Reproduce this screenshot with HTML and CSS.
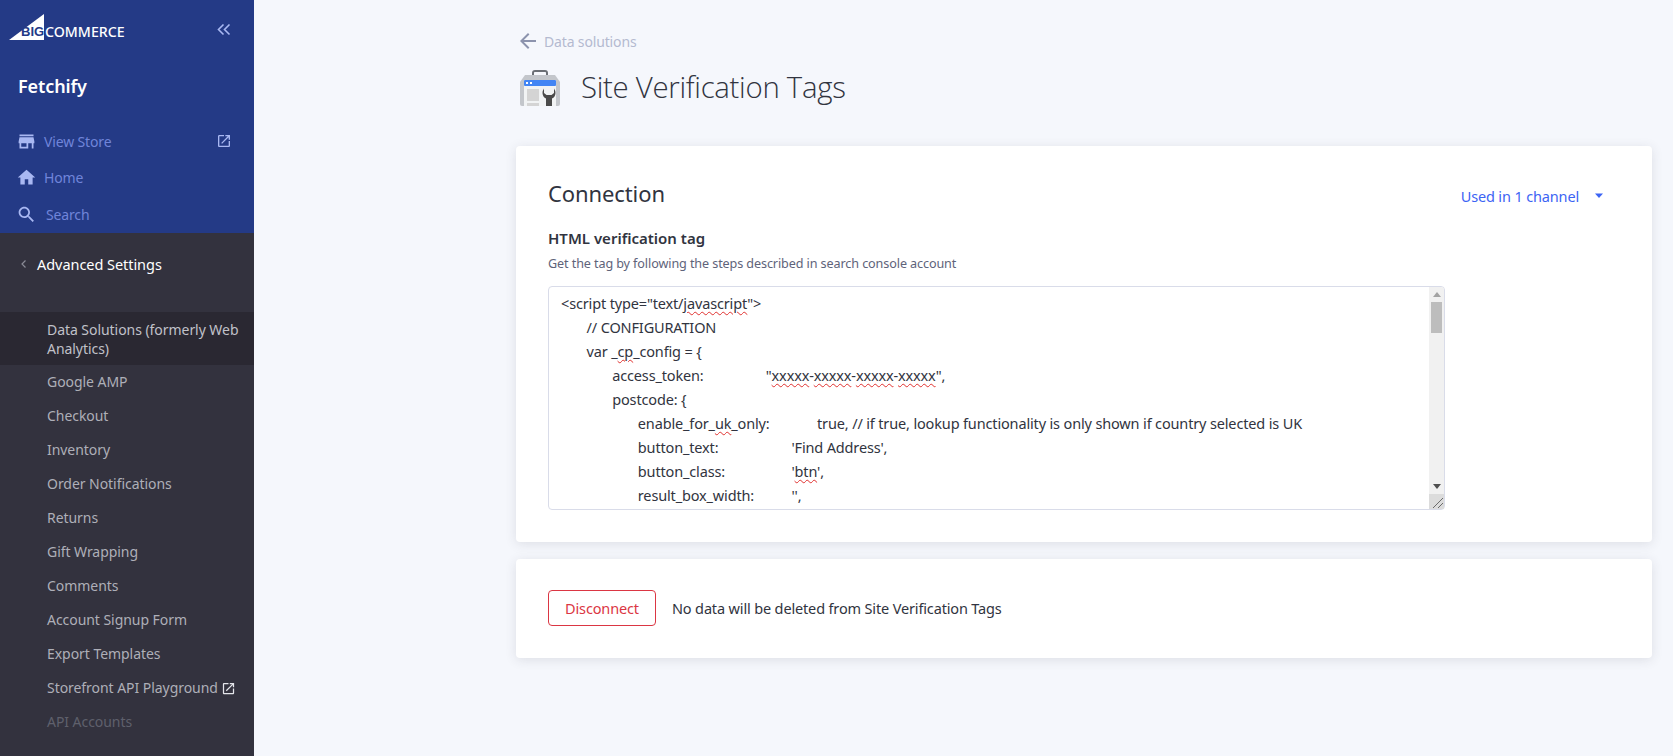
FILE: index.html
```html
<!DOCTYPE html>
<html lang="en">
<head>
<meta charset="utf-8">
<title>Site Verification Tags</title>
<link rel="stylesheet" href="styles.css">
</head>
<body>
<div class="app">
  <aside class="sidebar">
    <div class="brand-area">
      <div class="logo-row">
        <div class="logo">
          <svg class="logo-mark" viewBox="0 0 35 26"><path d="M35 0V26H0Z" fill="#fff"/></svg>
          <span class="logo-big">BIG</span><span class="logo-commerce">COMMERCE</span>
        </div>
        <svg class="collapse" viewBox="0 0 14 14" fill="none" stroke="#a9b8f2" stroke-width="1.6"><path d="M6.500 1.500 1.500 6.500l5 5M12.500 1.500l-5 5 5 5"/></svg>
      </div>
      <div class="store-name">Fetchify</div>
      <nav class="top-nav">
        <a class="top-item">
          <svg class="ico" viewBox="0 0 24 24"><path d="M20 4H4v2h16V4zm1 10v-2l-1-5H4l-1 5v2h1v6h10v-6h4v6h2v-6h1zm-9 4H6v-4h6v4z"/></svg>
          <span class="top-label">View Store</span>
          <svg class="ico-ext" viewBox="0 0 24 24"><path d="M19 19H5V5h7V3H5c-1.110 0-2 .9-2 2v14c0 1.100.89 2 2 2h14c1.100 0 2-.9 2-2v-7h-2v7zM14 3v2h3.590l-9.830 9.830 1.410 1.410L19 6.410V10h2V3h-7z"/></svg>
        </a>
        <a class="top-item">
          <svg class="ico" viewBox="0 0 24 24"><path d="M10 20v-6h4v6h5v-8h3L12 3 2 12h3v8z"/></svg>
          <span class="top-label">Home</span>
        </a>
        <a class="top-item">
          <svg class="ico" viewBox="0 0 24 24"><path d="M15.500 14h-.79l-.28-.27C15.410 12.590 16 11.110 16 9.500 16 5.910 13.090 3 9.500 3S3 5.910 3 9.500 5.910 16 9.500 16c1.610 0 3.090-.59 4.230-1.570l.27.28v.79l5 4.990L20.490 19l-4.990-5zm-6 0C7.010 14 5 11.990 5 9.500S7.010 5 9.500 5 14 7.010 14 9.500 11.990 14 9.500 14z"/></svg>
          <span class="top-label search-label">Search</span>
        </a>
      </nav>
    </div>
    <div class="settings-area">
      <div class="section-head">
        <svg class="back-chev" viewBox="0 0 8 12" fill="none" stroke="#8a8b96" stroke-width="1.2"><path d="M5.500 2.500 2 6l3.500 3.500"/></svg>
        <span>Advanced Settings</span>
      </div>
      <ul class="menu">
        <li class="menu-item active">Data Solutions (formerly Web Analytics)</li>
        <li class="menu-item">Google AMP</li>
        <li class="menu-item">Checkout</li>
        <li class="menu-item">Inventory</li>
        <li class="menu-item">Order Notifications</li>
        <li class="menu-item">Returns</li>
        <li class="menu-item">Gift Wrapping</li>
        <li class="menu-item">Comments</li>
        <li class="menu-item">Account Signup Form</li>
        <li class="menu-item">Export Templates</li>
        <li class="menu-item">Storefront API Playground<svg class="menu-ext" viewBox="0 0 24 24"><path d="M19 19H5V5h7V3H5c-1.110 0-2 .9-2 2v14c0 1.100.89 2 2 2h14c1.100 0 2-.9 2-2v-7h-2v7zM14 3v2h3.590l-9.830 9.830 1.410 1.410L19 6.410V10h2V3h-7z"/></svg></li>
        <li class="menu-item disabled">API Accounts</li>
      </ul>
    </div>
  </aside>

  <main class="main">
    <a class="breadcrumb">
      <svg class="back-arrow" viewBox="0 0 24 24"><path d="M20 11H7.830l5.590-5.590L12 4l-8 8 8 8 1.410-1.410L7.830 13H20v-2z"/></svg>
      <span>Data solutions</span>
    </a>
    <header class="page-head">
      <svg class="app-icon" viewBox="0 0 40 37">
        <path d="M12 8V4c0-2 1-3 3-3h10c2 0 3 1 3 3v4h-2V4c0-.6-.4-1-1-1H15c-.6 0-1 .4-1 1v4z" fill="#6b6f75"/>
        <path d="M5 6h30l5 7v22a2 2 0 0 1-2 2H2a2 2 0 0 1-2-2V13z" fill="#c3c6cb"/>
        <rect x="4" y="11" width="32" height="26" fill="#f1f3f4"/>
        <rect x="4" y="11" width="32" height="6" rx="1" fill="#4285f4"/>
        <rect x="6" y="13" width="2" height="2" fill="#fff"/><rect x="10" y="13" width="2" height="2" fill="#fff"/>
        <rect x="7" y="20" width="12" height="12" fill="#d4d4d4"/>
        <rect x="7" y="34" width="12" height="3" fill="#d4d4d4"/>
        <path d="M24 19.500a8 8 0 0 0-1.500 4.500c0 2.600 1.500 4.600 3.500 5.600V37h6v-7.400c2-1 3.500-3 3.500-5.600a8 8 0 0 0-1.500-4.500V24l-2.500 2h-5L24 24z" fill="#4a4a4a"/>
      </svg>
      <h1 class="page-title">Site Verification Tags</h1>
    </header>

    <section class="card connection">
      <div class="card-head">
        <h2 class="card-title">Connection</h2>
        <a class="channel">Used in 1 channel<svg class="caret" viewBox="0 0 10 6"><path d="M0 .5h8L4 5z"/></svg></a>
      </div>
      <div class="field-label">HTML verification tag</div>
      <div class="field-help">Get the tag by following the steps described in search console account</div>
      <div class="code-wrap">
        <div class="code-box"><div class="code-text">&lt;script type="text/<span class="typo">javascript</span>"&gt;
&#9;// CONFIGURATION
&#9;var _<span class="typo">cp</span>_config = {
&#9;&#9;access_token:&#9;&#9;&#9;"<span class="typo">xxxxx</span>-<span class="typo">xxxxx</span>-<span class="typo">xxxxx</span>-<span class="typo">xxxxx</span>",
&#9;&#9;postcode: {
&#9;&#9;&#9;enable_for_<span class="typo">uk</span>_only:&#9;&#9;true, // if true, lookup functionality is only shown if country selected is UK
&#9;&#9;&#9;button_text:&#9;&#9;&#9;'Find Address',
&#9;&#9;&#9;button_class:&#9;&#9;&#9;'<span class="typo">btn</span>',
&#9;&#9;&#9;result_box_width:&#9;&#9;'',</div></div>
        <div class="scrollbar">
          <div class="sb-btn"><svg class="sb-arrow" viewBox="0 0 8 5"><path d="M4 0l4 5H0z" fill="#a3a3a3"/></svg></div>
          <div class="sb-track"><div class="sb-thumb"></div></div>
          <div class="sb-btn"><svg class="sb-arrow" viewBox="0 0 8 5"><path d="M4 5L0 0h8z" fill="#505050"/></svg></div>
          <div class="sb-corner"><svg class="sb-grip" viewBox="0 0 15 15" fill="none" stroke="#6b6b6b"><path d="M4 14 14 4M9 14l5-5"/></svg></div>
        </div>
      </div>
    </section>

    <section class="card disconnect">
      <button class="danger-btn">Disconnect</button>
      <span class="disconnect-note">No data will be deleted from Site Verification Tags</span>
    </section>
  </main>
</div>
</body>
</html>
```
FILE: styles.css
```css
* { box-sizing: border-box; }
html, body { margin: 0; height: 100%; overflow: hidden; }
body {
  font-family: "Noto Sans", "Open Sans", sans-serif;
  background: #f5f7fc;
  color: #313440;
}
.app { display: flex; height: 756px; }

/* Sidebar */
.sidebar { width: 254px; flex: none; display: flex; flex-direction: column; }
.brand-area { height: 233px; background: #243a86; }
.logo-row { display: flex; justify-content: space-between; height: 54px; padding: 14px 23px 0 9px; }
.logo { display: flex; position: relative; height: 26px; width: 116px; }
.logo-mark { position: absolute; left: 0; top: 0; width: 35px; height: 26px; }
.logo-big { position: absolute; left: 12px; top: 10px; font: 700 13px/16px "Liberation Sans", sans-serif; color: #243a86; }
.logo-commerce { position: absolute; left: 36px; top: 10px; font: 500 14.2px/16px "Noto Sans", sans-serif; color: #fff; }
.collapse { width: 14px; height: 14px; margin-top: 9px; }
.store-name { height: 64px; padding-left: 18px; font-size: 18px; font-weight: 600; line-height: 64px; color: #fff; letter-spacing: -.1px; }
.top-nav { display: flex; flex-direction: column; padding-top: 5px; }
.top-item { display: flex; align-items: center; height: 36px; padding: 0 22px 0 16px; color: #7085da; font-size: 14px; letter-spacing: -.15px; }
.top-item:last-child { margin-top: 1px; }
.ico { width: 21px; height: 21px; fill: #a9b8f2; flex: none; margin-right: 7px; }
.top-label { flex: 1; }
.search-label { padding-left: 2px; }
.ico-ext { width: 16px; height: 16px; fill: #a9b8f2; flex: none; }

.settings-area { flex: 1; background: #33323e; }
.section-head { display: flex; align-items: center; height: 79px; padding: 0 0 17px 20px; color: #fff; font-size: 14.5px; letter-spacing: -.05px; }
.back-chev { width: 8px; height: 12px; margin-right: 9px; }
.menu { list-style: none; margin: 0; padding: 0; }
.menu-item { height: 34px; padding: 7px 8px 0 47px; font-size: 14px; line-height: 20px; color: #aeafb8; letter-spacing: -.05px; }
.menu-item.active { height: 53px; padding-top: 8px; background: #2a2832; color: #c0c1c9; line-height: 19px; }
.menu-item.disabled { color: #5f606c; }
.menu-ext { width: 15px; height: 15px; fill: #e4e5ea; vertical-align: -3px; margin-left: 3px; }

/* Main */
.main { flex: 1; padding: 29px 21px 0 262px; font-size: 14.5px; letter-spacing: -.15px; }
.breadcrumb { display: flex; align-items: center; height: 24px; color: #b4bad0; font-size: 14px; }
.back-arrow { width: 24px; height: 24px; fill: #8c93ad; margin-right: 4px; }
.page-head { display: flex; align-items: center; height: 56px; margin-top: 6px; padding-left: 4px; }
.app-icon { width: 40px; height: 37px; margin-right: 21px; flex: none; }
.page-title { margin: 0; font-family: "Open Sans", sans-serif; font-size: 29.4px; font-weight: 300; letter-spacing: -.3px; color: #313440; }

.card { background: #fff; border-radius: 4px; box-shadow: 0 2px 12px rgba(49, 52, 64, .12); }
.connection { margin-top: 31px; height: 396px; padding: 31px 32px 0; }
.card-head { display: flex; justify-content: space-between; align-items: center; height: 32px; }
.card-title { margin: 0; font-size: 22px; font-weight: 400; color: #313440; letter-spacing: -.1px; }
.channel { display: flex; align-items: center; color: #3c64f4; margin-right: 15px; margin-top: 6px; }
.caret { width: 10px; height: 6px; fill: #3c64f4; margin-left: 16px; }
.field-label { margin-top: 17px; height: 24px; font-size: 15px; font-weight: 600; line-height: 24px; letter-spacing: 0; }
.field-help { margin-top: 4px; font-size: 12.6px; line-height: 20px; color: #5e637a; letter-spacing: -.1px; }
.code-wrap { position: relative; margin-top: 12px; width: 897px; height: 224px; }
.code-box {
  height: 100%; padding: 4px 12px 0;
  border: 1px solid #d9dce9; border-radius: 4px;
  overflow: hidden; line-height: 24px; color: #313440;
}
.code-text { white-space: pre-wrap; tab-size: 25.6px; }
.typo { text-decoration: underline wavy #e0312f 1px; text-underline-offset: 2px; }

.scrollbar { position: absolute; top: 1px; right: 1px; bottom: 1px; width: 15px; display: flex; flex-direction: column; background: #f1f1f1; border-radius: 0 3px 3px 0; }
.sb-btn { height: 15px; flex: none; display: flex; align-items: center; justify-content: center; }
.sb-arrow { width: 8px; height: 5px; }
.sb-track { flex: 1; }
.sb-thumb { height: 31px; margin: 0 2px; background: #bdbdbd; }
.sb-corner { height: 15px; flex: none; background: #dcdcdc; }
.sb-grip { display: block; width: 15px; height: 15px; }

.disconnect { display: flex; align-items: center; margin-top: 17px; height: 99px; padding: 0 0 2px 32px; }
.danger-btn { width: 108px; height: 36px; background: #fff; border: 1px solid #db3643; border-radius: 4px; color: #db3643; font: inherit; letter-spacing: inherit; padding: 0; }
.disconnect-note { margin-left: 16px; color: #313440; }
```
